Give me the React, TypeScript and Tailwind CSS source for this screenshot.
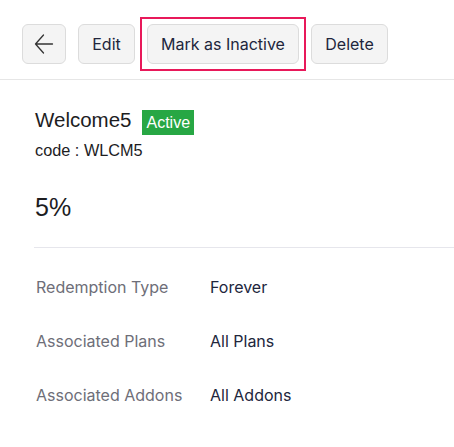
import React from "react";

const inter = { fontFamily: "Inter, 'Noto Sans', sans-serif" };
const arial = { fontFamily: "'Liberation Sans', Arial, sans-serif" };

function Btn({ children, className = "" }: { children: React.ReactNode; className?: string }) {
  return (
    <button
      className={`h-10 rounded-md border border-[#dcdcdc] bg-[#f4f4f4] text-[16px] text-[#21263c] flex items-center justify-center ${className}`}
      style={inter}
    >
      {children}
    </button>
  );
}

function Row({ label, value }: { label: string; value: string }) {
  return (
    <div className="flex items-center h-[54px] text-[16px]" style={inter}>
      <div className="w-[175px] pl-[1px] text-[#6e6e78]">{label}</div>
      <div className="text-[#21263c]">{value}</div>
    </div>
  );
}

export default function App() {
  return (
    <div className="w-[454px] h-[447px] bg-white overflow-hidden">
      <div className="flex items-center gap-3 pl-[22px] pt-[24px] pb-[15px] border-b border-[#e6e6e6]">
        <Btn className="w-11">
          <svg width="22" height="22" viewBox="0 0 22 22" fill="none" stroke="#333" strokeWidth="1.3" strokeLinecap="round" strokeLinejoin="round">
            <path d="M19.5 11H2.5M10.5 2l-8 9 8 9" />
          </svg>
        </Btn>
        <Btn className="w-[57px]">Edit</Btn>
        <div className="relative">
          <Btn className="w-[152px]">Mark as Inactive</Btn>
          <div className="absolute -inset-[7px] border-2 border-[#e8195a] pointer-events-none" />
        </div>
        <Btn className="w-[77px]">Delete</Btn>
      </div>
      <div className="pl-[35px]">
        <div className="flex items-start gap-[11px] pt-[28px]">
          <span className="text-[20.5px] text-[#1d1d1f] leading-6" style={arial}>Welcome5</span>
          <span className="mt-[2px] h-[25px] px-1 bg-[#27a744] text-white text-[16px] flex items-center" style={arial}>Active</span>
        </div>
        <div className="text-[16.3px] text-[#1d1d1f] mt-[5px] leading-5" style={arial}>code : WLCM5</div>
        <div className="text-[25px] text-[#1d1d1f] mt-[33px] leading-7" style={arial}>5%</div>
        <div className="border-b border-[#e6e6ec] mt-[26px] -ml-[1px]" />
        <div className="pt-[12px]">
          <Row label="Redemption Type" value="Forever" />
          <Row label="Associated Plans" value="All Plans" />
          <Row label="Associated Addons" value="All Addons" />
        </div>
      </div>
    </div>
  );
}
